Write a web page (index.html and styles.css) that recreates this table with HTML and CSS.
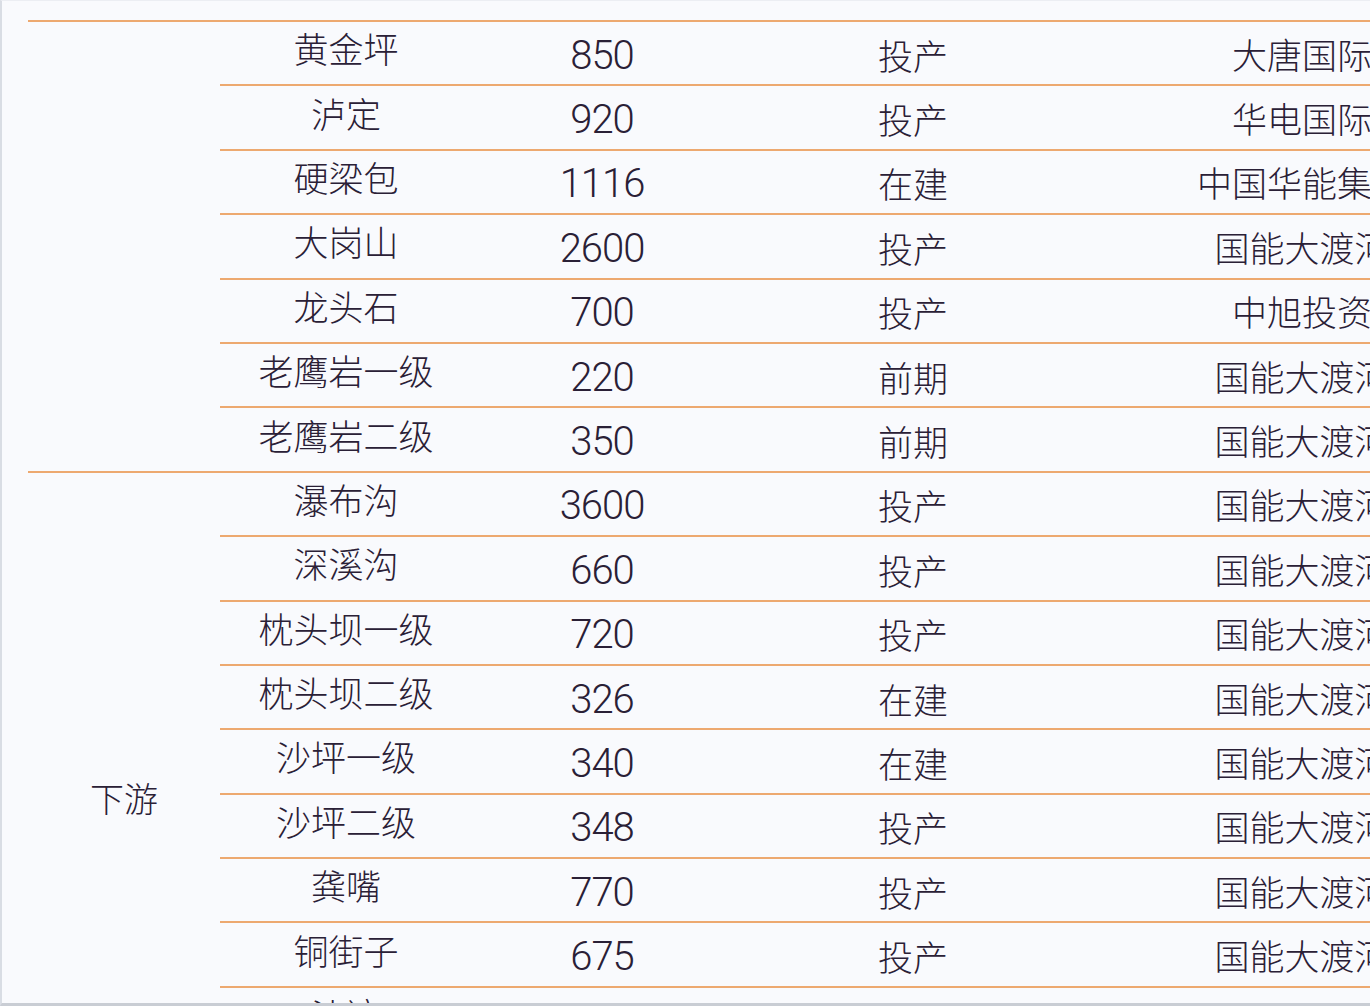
FILE: index.html
```html
<!DOCTYPE html>
<html lang="zh-CN">
<head>
<meta charset="utf-8">
<title>雅砻江/大渡河水电站</title>
<link rel="stylesheet" href="styles.css">
</head>
<body>
<div class="frame">
  <div class="grid">
    <div class="cell group span7"></div>
    <div class="cell name">黄金坪</div><div class="cell num">850</div><div class="cell status">投产</div><div class="cell owner">大唐国际</div>
    <div class="cell name">泸定</div><div class="cell num">920</div><div class="cell status">投产</div><div class="cell owner">华电国际</div>
    <div class="cell name">硬梁包</div><div class="cell num">1116</div><div class="cell status">在建</div><div class="cell owner">中国华能集团</div>
    <div class="cell name">大岗山</div><div class="cell num">2600</div><div class="cell status">投产</div><div class="cell owner">国能大渡河</div>
    <div class="cell name">龙头石</div><div class="cell num">700</div><div class="cell status">投产</div><div class="cell owner">中旭投资</div>
    <div class="cell name">老鹰岩一级</div><div class="cell num">220</div><div class="cell status">前期</div><div class="cell owner">国能大渡河</div>
    <div class="cell name">老鹰岩二级</div><div class="cell num">350</div><div class="cell status">前期</div><div class="cell owner">国能大渡河</div>

    <div class="cell group span10"><span class="group-label">下游</span></div>
    <div class="cell name">瀑布沟</div><div class="cell num">3600</div><div class="cell status">投产</div><div class="cell owner">国能大渡河</div>
    <div class="cell name">深溪沟</div><div class="cell num">660</div><div class="cell status">投产</div><div class="cell owner">国能大渡河</div>
    <div class="cell name">枕头坝一级</div><div class="cell num">720</div><div class="cell status">投产</div><div class="cell owner">国能大渡河</div>
    <div class="cell name">枕头坝二级</div><div class="cell num">326</div><div class="cell status">在建</div><div class="cell owner">国能大渡河</div>
    <div class="cell name">沙坪一级</div><div class="cell num">340</div><div class="cell status">在建</div><div class="cell owner">国能大渡河</div>
    <div class="cell name">沙坪二级</div><div class="cell num">348</div><div class="cell status">投产</div><div class="cell owner">国能大渡河</div>
    <div class="cell name">龚嘴</div><div class="cell num">770</div><div class="cell status">投产</div><div class="cell owner">国能大渡河</div>
    <div class="cell name">铜街子</div><div class="cell num">675</div><div class="cell status">投产</div><div class="cell owner">国能大渡河</div>
    <div class="cell name">沙湾</div><div class="cell num">480</div><div class="cell status">投产</div><div class="cell owner">国能大渡河</div>
    <div class="cell name">安谷</div><div class="cell num">772</div><div class="cell status">投产</div><div class="cell owner">国能大渡河</div>
  </div>
</div>
</body>
</html>
```

FILE: styles.css
```css
html, body {
  margin: 0;
  padding: 0;
  background: #f9fafd;
}

.frame {
  box-sizing: border-box;
  width: 1370px;
  height: 1006px;
  overflow: hidden;
  border-left: 2px solid #d9dde4;
  border-top: 1px solid #eceef3;
  border-bottom: 3px solid #c9cdd4;
  padding: 19px 0 0 26px;
  background: #f9fafd;
  color: #2a2036;
  font-family: "Noto Sans CJK SC", "Noto Sans", sans-serif;
  font-weight: 300;
}

.grid {
  display: grid;
  grid-template-columns: 192px 252px 260px 362px 416px;
  grid-auto-rows: 64.4px;
  width: 1482px;
}

.cell {
  box-sizing: border-box;
  border-top: 2px solid #eda970;
  display: flex;
  align-items: center;
  justify-content: center;
  white-space: nowrap;
  font-size: 35px;
  line-height: 1;
}

.group {
  grid-column: 1;
}

.span7 { grid-row: span 7; }
.span10 { grid-row: span 10; }

.group-label {
  font-size: 34px;
  padding-top: 8px;
}

.name {
  padding-bottom: 11px;
}

.num {
  font-family: Roboto, "Liberation Sans", Arial, sans-serif;
  font-weight: 300;
  font-size: 40px;
  letter-spacing: -1px;
  padding-top: 5px;
}

.status {
  padding-top: 2px;
}

.owner {
  padding-top: 0;
}
```
